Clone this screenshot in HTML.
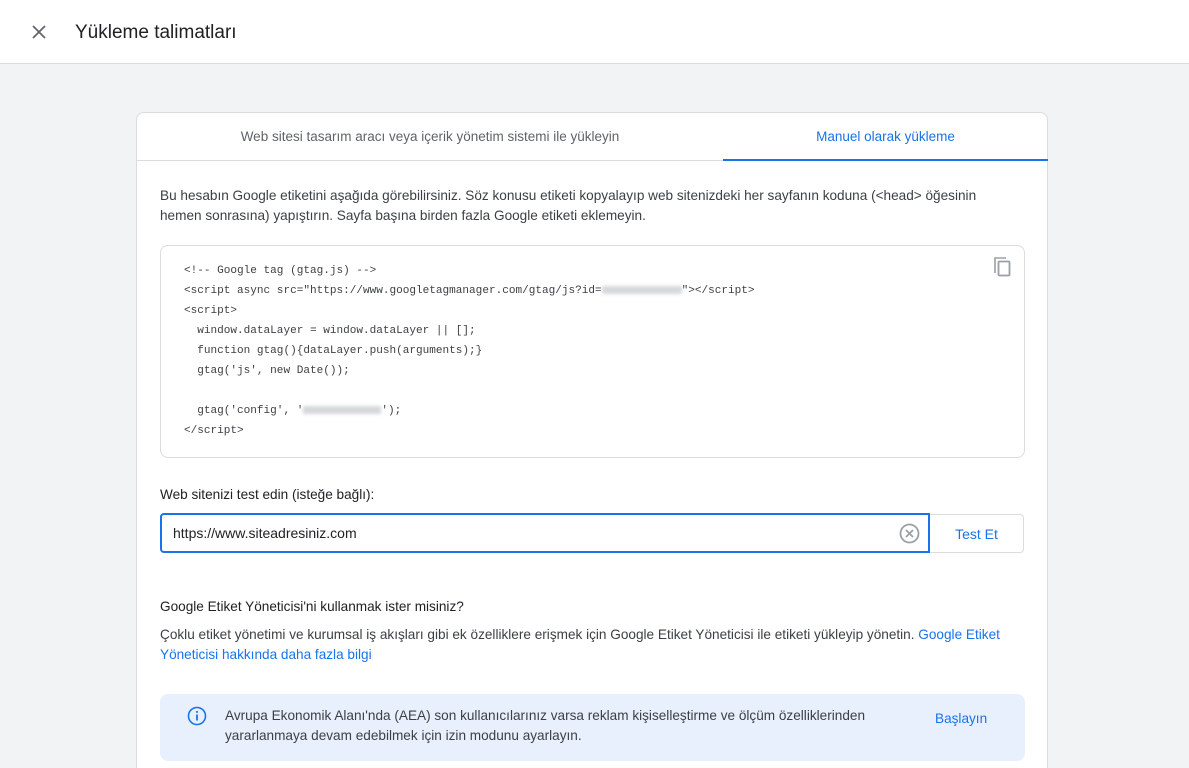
<!DOCTYPE html>
<html><head><meta charset="utf-8"><style>
*{box-sizing:border-box;margin:0;padding:0}
html,body{width:1189px;height:768px;overflow:hidden}
body{background:#f1f3f4;font-family:"Liberation Sans",sans-serif;color:#3c4043;position:relative}
.top{position:absolute;left:0;top:0;width:1189px;height:64px;background:#fff;border-bottom:1px solid #dadce0}
.top .x{position:absolute;left:32px;top:25px}
.top h1{position:absolute;left:75px;top:22px;font-size:19px;font-weight:normal;color:#202124}
.card{position:absolute;left:136px;top:112px;width:912px;height:680px;background:#fff;border:1px solid #dadce0;border-radius:8px}
.tabs{height:48px;border-bottom:1px solid #dadce0;position:relative;font-size:13.5px}
.tab1{position:absolute;left:0;width:586px;top:16px;text-align:center;color:#5f6368}
.tab2{position:absolute;left:586px;width:325px;top:16px;text-align:center;color:#1a73e8}
.ul{position:absolute;left:586px;width:325px;bottom:-1px;height:2px;background:#1a73e8}
.p{position:absolute;left:23px;font-size:13.6px;line-height:20px;color:#3c4043}
.code{position:absolute;left:23px;top:132px;width:865px;height:213px;border:1px solid #dadce0;border-radius:8px;font-family:"Liberation Mono",monospace;font-size:11.05px;line-height:20px;color:#3c4043;padding:15px 0 0 23px;white-space:pre}
.blur{display:inline-block;width:80px;height:8px;background:#d6d8db;vertical-align:middle;filter:blur(1.5px)}
.inp{position:absolute;left:23px;top:400px;width:770px;height:40px;border:2px solid #1a73e8;border-radius:4px 0 0 4px;font-size:14px;padding:10px 11px;color:#202124}
.btn{position:absolute;left:793px;top:401px;width:94px;height:39px;border:1px solid #dadce0;border-left:none;border-radius:0 4px 4px 0;color:#1a73e8;font-size:14px;text-align:center;line-height:38px}
.info{position:absolute;left:23px;top:581px;width:865px;height:67px;background:#e8f0fe;border-radius:8px}
a{color:#1a73e8;text-decoration:none}
</style></head><body>
<div class="top">
<svg class="x" width="14" height="14" viewBox="0 0 14 14"><path d="M1 1L13 13M13 1L1 13" stroke="#5f6368" stroke-width="1.7"/></svg>
<h1>Yükleme talimatları</h1>
</div>
<div class="card">
<div class="tabs"><div class="tab1">Web sitesi tasarım aracı veya içerik yönetim sistemi ile yükleyin</div><div class="tab2">Manuel olarak yükleme</div><div class="ul"></div></div>
<div class="p" style="top:73px;width:840px">Bu hesabın Google etiketini aşağıda görebilirsiniz. Söz konusu etiketi kopyalayıp web sitenizdeki her sayfanın koduna (&lt;head&gt; öğesinin hemen sonrasına) yapıştırın. Sayfa başına birden fazla Google etiketi eklemeyin.</div>
<div class="code">&lt;!-- Google tag (gtag.js) --&gt;
&lt;script async src="https://www.googletagmanager.com/gtag/js?id=<span class="blur"></span>"&gt;&lt;/script&gt;
&lt;script&gt;
  window.dataLayer = window.dataLayer || [];
  function gtag(){dataLayer.push(arguments);}
  gtag('js', new Date());

  gtag('config', '<span class="blur" style="width:78px"></span>');
&lt;/script&gt;<svg style="position:absolute;right:10px;top:9px" width="22" height="24" viewBox="0 0 22 24"><path d="M3 18V3h11" fill="none" stroke="#9aa0a6" stroke-width="1.6"/><rect x="6.5" y="6.5" width="11" height="14" rx="1" fill="none" stroke="#9aa0a6" stroke-width="1.8"/></svg></div>
<div class="p" style="top:372px;color:#202124">Web sitenizi test edin (isteğe bağlı):</div>
<div class="inp">https://www.siteadresiniz.com
<svg style="position:absolute;right:8px;top:8px" width="21" height="21" viewBox="0 0 21 21"><circle cx="10.5" cy="10.5" r="9" fill="none" stroke="#9aa0a6" stroke-width="1.8"/><path d="M7 7L14 14M14 7L7 14" stroke="#9aa0a6" stroke-width="1.8"/></svg></div>
<div class="btn">Test Et</div>
<div class="p" style="top:484px;color:#202124">Google Etiket Yöneticisi'ni kullanmak ister misiniz?</div>
<div class="p" style="top:512px;width:862px">Çoklu etiket yönetimi ve kurumsal iş akışları gibi ek özelliklere erişmek için Google Etiket Yöneticisi ile etiketi yükleyip yönetin. <a>Google Etiket Yöneticisi hakkında daha fazla bilgi</a></div>
<div class="info">
<svg style="position:absolute;left:27px;top:12px" width="20" height="20" viewBox="0 0 20 20"><circle cx="10" cy="10" r="8.5" fill="none" stroke="#1a73e8" stroke-width="1.6"/><rect x="9.1" y="8.5" width="1.8" height="6" fill="#1a73e8"/><rect x="9.1" y="5" width="1.8" height="1.8" fill="#1a73e8"/></svg>
<div class="p" style="left:65px;top:12px;width:690px;font-size:13.6px">Avrupa Ekonomik Alanı'nda (AEA) son kullanıcılarınız varsa reklam kişiselleştirme ve ölçüm özelliklerinden yararlanmaya devam edebilmek için izin modunu ayarlayın.</div>
<div class="p" style="left:775px;top:15px;color:#1a73e8">Başlayın</div>
</div>
</div>
</body></html>
